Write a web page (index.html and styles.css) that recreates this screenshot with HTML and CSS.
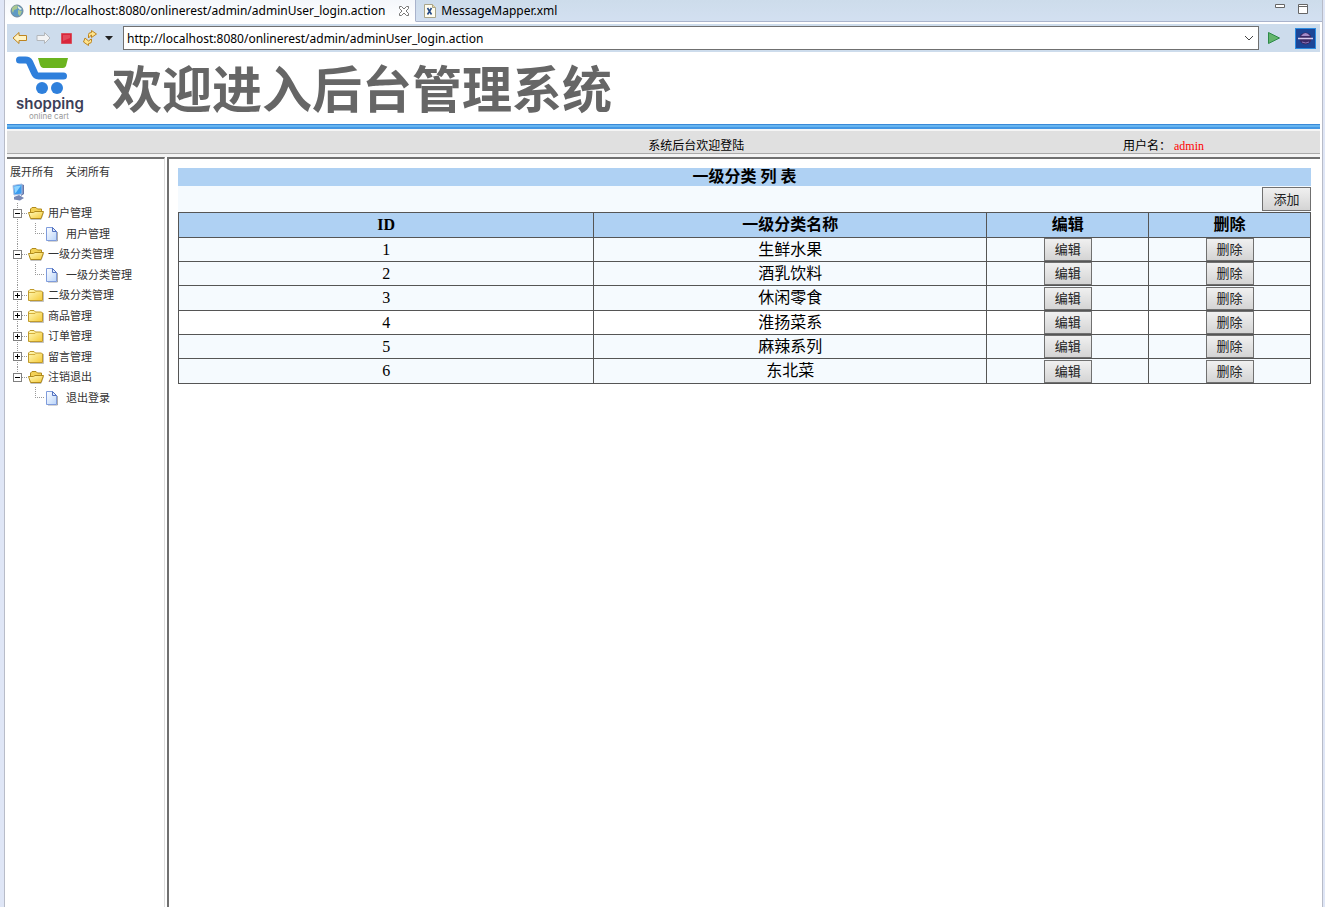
FILE: index.html
```
<!DOCTYPE html>
<html lang="zh-CN">
<head>
    <meta charset="UTF-8">
    <meta name="viewport" content="width=device-width, initial-scale=1.0">
    <title>后台管理系统</title>
    <link rel="stylesheet" href="styles.css">
</head>
<body>

    <!-- Shared icons -->
    <svg class="sprite" aria-hidden="true">
        <defs>
            <linearGradient id="folder-fill" x1="0" y1="0" x2="1" y2="1">
                <stop offset="0" stop-color="#fffbc0"/>
                <stop offset="1" stop-color="#f5c935"/>
            </linearGradient>
            <linearGradient id="page-fill" x1="0" y1="0" x2="1" y2="1">
                <stop offset="0" stop-color="#ffffff"/>
                <stop offset="1" stop-color="#b9d4fa"/>
            </linearGradient>
        </defs>
        <symbol id="folder-open" viewBox="0 0 16 16">
            <path d="M2.500 14.500h10.500l2.500-7" fill="none" stroke="#999" opacity=".6"/>
            <path d="M2.500 13V4l1.500-1.500h4L9.500 4h4V8" fill="#f3d155" stroke="#b08a1c"/>
            <path d="M.5 7.500h5l1.500-1h8.500L13 13.500H2.500z" fill="url(#folder-fill)" stroke="#b08a1c"/>
        </symbol>
        <symbol id="folder" viewBox="0 0 16 16">
            <path d="M2 14.500h13.500V5" fill="none" stroke="#999" opacity=".6"/>
            <path d="M.5 13.500V4L2 2.500h4L7.500 4h6l1 1v8.500z" fill="url(#folder-fill)" stroke="#c09a2c"/>
            <path d="M1 5.500h6l1-1" fill="none" stroke="#d4ae3c"/>
        </symbol>
        <symbol id="page" viewBox="0 0 16 16">
            <path d="M3 15h9.500V6" fill="none" stroke="#777" opacity=".6"/>
            <path d="M1.500 1.500h6l4 4v9h-10z" fill="url(#page-fill)" stroke="#7f9cdc"/>
            <path d="M7.500 1.500v4h4z" fill="#dfeafd" stroke="#5372c0"/>
        </symbol>
        <symbol id="plus" viewBox="0 0 9 9">
            <rect x=".5" y=".5" width="8" height="8" fill="#fff" stroke="#808080"/>
            <path d="M2 4.500h5M4.500 2v5" stroke="#000"/>
        </symbol>
        <symbol id="minus" viewBox="0 0 9 9">
            <rect x=".5" y=".5" width="8" height="8" fill="#fff" stroke="#808080"/>
            <path d="M2 4.500h5" stroke="#000"/>
        </symbol>
    </svg>

    <div class="window">
        <!-- Editor tabs -->
        <div class="tabs">
            <div class="tab active">
                <svg width="14" height="14" viewBox="0 0 14 14">
                    <circle cx="7" cy="7" r="6" fill="#5f9ac4" stroke="#6f8798"/>
                    <path d="M2 4q3-4 6-2l-1 3-3 1-1 3-1-2zM8 6l4 1-2 5-2-2z" fill="#a9c890"/>
                    <path d="M8 2l4 3-2 1-2-2z" fill="#e8efe0"/>
                </svg>
                <span>http://localhost:8080/onlinerest/admin/adminUser_login.action</span>
                <button class="icon-btn close" aria-label="Close">
                    <svg width="12" height="12" viewBox="0 0 12 12">
                        <path d="M1.500 1.500h2L6 4l2.500-2.500h2v2L8 6l2.500 2.500v2h-2L6 8l-2.500 2.500h-2v-2L4 6 1.500 3.500z" fill="#fff" stroke="#777"/>
                    </svg>
                </button>
            </div>
            <div class="tab">
                <svg width="12" height="14" viewBox="0 0 12 14">
                    <path d="M.5.5h8l3 3v10H.5z" fill="#fffdf0" stroke="#a9a58a"/>
                    <path d="M8.500.5v3h3" fill="#e9d9a0" stroke="#a9a58a"/>
                    <path d="M3.500 4l4 6.500M7.500 4l-4 6.500" stroke="#274b86" stroke-width="1.600"/>
                </svg>
                <span>MessageMapper.xml</span>
            </div>
            <div class="window-btns">
                <button class="icon-btn" aria-label="Minimize">
                    <svg width="12" height="12" viewBox="0 0 12 12"><path d="M1.500 1.500h9v3h-9z" fill="#fff" stroke="#666"/></svg>
                </button>
                <button class="icon-btn" aria-label="Maximize">
                    <svg width="12" height="12" viewBox="0 0 12 12"><path d="M1.500 1.500h9v9h-9zM1.500 3.500h9" fill="#fff" stroke="#666"/></svg>
                </button>
            </div>
        </div>

        <!-- Browser toolbar -->
        <div class="toolbar">
            <button class="icon-btn" aria-label="Back">
                <svg width="16" height="14" viewBox="0 0 16 14"><path d="M1 7L7 1.500v3h7.500v5H7v3z" fill="#fff3c4" stroke="#bd8420"/></svg>
            </button>
            <button class="icon-btn" aria-label="Forward">
                <svg width="16" height="14" viewBox="0 0 16 14"><path d="M14 7L8.500 1.500v3H1v5h7.500v3z" fill="#f2f3f4" stroke="#b3b7bb"/></svg>
            </button>
            <button class="icon-btn" aria-label="Stop">
                <svg width="14" height="14" viewBox="0 0 14 14"><path d="M1.500 2.500h10v10h-10z" fill="#d9263c" stroke="#d8505c"/><path d="M3 4h7v3l-7 3z" fill="#e34a5a"/></svg>
            </button>
            <button class="icon-btn" aria-label="Refresh">
                <svg width="16" height="16" viewBox="0 0 16 16">
                    <path d="M6.500 8V4.500q0-2 3-2V.5L14.500 4l-5 3.500V5q-1 0-1 1z" fill="#ffe48c" stroke="#bd8420"/>
                    <path d="M9.500 9v2.500q0 2-3 2v2l-5-3.500L3 8l3.500 3q1 0 1-1z" fill="#ffe48c" stroke="#bd8420"/>
                </svg>
            </button>
            <button class="icon-btn menu-arrow" aria-label="Menu">
                <svg width="8" height="5" viewBox="0 0 8 5"><path d="M0 0h8L4 4.500z" fill="#222"/></svg>
            </button>
            <div class="address">
                <input type="text" aria-label="URL" value="http://localhost:8080/onlinerest/admin/adminUser_login.action">
                <button class="icon-btn" aria-label="History">
                    <svg width="10" height="6" viewBox="0 0 10 6"><path d="M1 1l4 4 4-4" fill="none" stroke="#444"/></svg>
                </button>
            </div>
            <button class="icon-btn go" aria-label="Go">
                <svg width="14" height="14" viewBox="0 0 14 14"><path d="M1.500 1.500v11L12.500 7z" fill="#63b56c" stroke="#2d8a48"/></svg>
            </button>
            <svg class="eclipse" width="21" height="21" viewBox="0 0 21 21">
                <rect x=".5" y=".5" width="20" height="20" fill="#1c4596" stroke="#2a8be0"/>
                <circle cx="10.500" cy="10.500" r="6" fill="#3c2a66"/>
                <path d="M6 8q4.500-6 9 0z" fill="#a48bc8"/>
                <path d="M3 10.500h15" stroke="#d9cdf0" stroke-width="1.500"/>
                <path d="M7 14q4 2 7 0" stroke="#8d76bd" fill="none"/>
            </svg>
        </div>

        <!-- Page header -->
        <header class="banner">
            <div class="logo">
                <svg width="54" height="38" viewBox="0 0 54 38">
                    <path d="M22 2h30l-2 8q-1 2-3 2H27q-2 0-3-3z" fill="#6bb41e"/>
                    <path d="M3.500 4h6q3 0 4 2l5 11q1 3 4 3h25" fill="none" stroke="#2f80dc" stroke-width="7" stroke-linecap="round" stroke-linejoin="round"/>
                    <circle cx="26" cy="32" r="6" fill="#2f80dc"/>
                    <circle cx="41" cy="32" r="6" fill="#2f80dc"/>
                </svg>
                <strong>shopping</strong>
                <small>online cart</small>
            </div>
            <h1>欢迎进入后台管理系统</h1>
        </header>
        <div class="status">
            <span class="welcome">系统后台欢迎登陆</span>
            <span>用户名： <span class="user">admin</span></span>
        </div>

        <div class="frames">
            <!-- Menu tree -->
            <nav class="sidebar">
                <div class="tree-links">
                    <a href="#">展开所有</a>
                    <a href="#">关闭所有</a>
                </div>
                <svg class="computer" width="16" height="18" viewBox="0 0 16 18">
                    <path d="M2 14l5-2 5 3-4 2.500-6-1z" fill="#7787b4"/>
                    <path d="M9 1l3 1v9l-3 2z" fill="#6878a8"/>
                    <path d="M1 2.500l9-1.500v10l-8 1z" fill="#3a9cf0" stroke="#a9bce0"/>
                    <path d="M2 3.500l7-1-5 7-1 .5z" fill="#8fd4ff"/>
                </svg>
                <ul class="tree">
                    <li>
                        <a class="node" href="#"><svg class="toggle"><use href="#minus"/></svg><svg class="icon"><use href="#folder-open"/></svg>用户管理</a>
                        <ul>
                            <li><a class="node" href="#"><svg class="icon"><use href="#page"/></svg>用户管理</a></li>
                        </ul>
                    </li>
                    <li>
                        <a class="node" href="#"><svg class="toggle"><use href="#minus"/></svg><svg class="icon"><use href="#folder-open"/></svg>一级分类管理</a>
                        <ul>
                            <li><a class="node" href="#"><svg class="icon"><use href="#page"/></svg>一级分类管理</a></li>
                        </ul>
                    </li>
                    <li><a class="node" href="#"><svg class="toggle"><use href="#plus"/></svg><svg class="icon"><use href="#folder"/></svg>二级分类管理</a></li>
                    <li><a class="node" href="#"><svg class="toggle"><use href="#plus"/></svg><svg class="icon"><use href="#folder"/></svg>商品管理</a></li>
                    <li><a class="node" href="#"><svg class="toggle"><use href="#plus"/></svg><svg class="icon"><use href="#folder"/></svg>订单管理</a></li>
                    <li><a class="node" href="#"><svg class="toggle"><use href="#plus"/></svg><svg class="icon"><use href="#folder"/></svg>留言管理</a></li>
                    <li>
                        <a class="node" href="#"><svg class="toggle"><use href="#minus"/></svg><svg class="icon"><use href="#folder-open"/></svg>注销退出</a>
                        <ul>
                            <li><a class="node" href="#"><svg class="icon"><use href="#page"/></svg>退出登录</a></li>
                        </ul>
                    </li>
                </ul>
            </nav>

            <!-- Category list -->
            <main class="content">
                <h2>一级分类 列 表</h2>
                <div class="actions"><button class="btn">添加</button></div>
                <table class="list">
                    <colgroup>
                        <col class="col-id">
                        <col class="col-name">
                        <col class="col-op">
                        <col class="col-op">
                    </colgroup>
                    <thead>
                        <tr>
                            <th>ID</th>
                            <th>一级分类名称</th>
                            <th>编辑</th>
                            <th>删除</th>
                        </tr>
                    </thead>
                    <tbody>
                        <tr>
                            <td>1</td>
                            <td>生鲜水果</td>
                            <td><button class="btn">编辑</button></td>
                            <td><button class="btn">删除</button></td>
                        </tr>
                        <tr>
                            <td>2</td>
                            <td>酒乳饮料</td>
                            <td><button class="btn">编辑</button></td>
                            <td><button class="btn">删除</button></td>
                        </tr>
                        <tr>
                            <td>3</td>
                            <td>休闲零食</td>
                            <td><button class="btn">编辑</button></td>
                            <td><button class="btn">删除</button></td>
                        </tr>
                        <tr class="current">
                            <td>4</td>
                            <td>淮扬菜系</td>
                            <td><button class="btn">编辑</button></td>
                            <td><button class="btn">删除</button></td>
                        </tr>
                        <tr>
                            <td>5</td>
                            <td>麻辣系列</td>
                            <td><button class="btn">编辑</button></td>
                            <td><button class="btn">删除</button></td>
                        </tr>
                        <tr>
                            <td>6</td>
                            <td>东北菜</td>
                            <td><button class="btn">编辑</button></td>
                            <td><button class="btn">删除</button></td>
                        </tr>
                    </tbody>
                </table>
            </main>
        </div>
    </div>

</body>
</html>
```
FILE: styles.css
```
* {
    box-sizing: border-box;
}
body {
    margin: 0;
    padding: 0 2px 0 4px;
    background-color: #dfe6f6;
    font-family: "Liberation Serif", "Noto Sans CJK SC", serif;
    color: #000;
}
.sprite {
    position: absolute;
    width: 0;
    height: 0;
}
.window {
    display: flex;
    flex-direction: column;
    min-height: 100vh;
    background-color: #fff;
    border-left: 1px solid #b8bcc8;
    border-right: 1px solid #b8bcc8;
}
.icon-btn {
    display: flex;
    padding: 0;
    border: 0;
    background: none;
}

/* Tabs */
.tabs {
    display: flex;
    height: 22px;
    background: linear-gradient(#cddceb, #d3e0f1);
    font: 12px "Noto Sans", sans-serif;
}
.tab {
    display: flex;
    align-items: center;
    gap: 5px;
    padding: 0 8px;
    border-bottom: 1px solid #a9b3cc;
}
.tab.active {
    padding: 0 5px;
    background: linear-gradient(#f4f7fb, #fff);
    border-right: 1px solid #a9b3cc;
    border-bottom-color: #fff;
}
.close {
    margin-left: 8px;
}
.window-btns {
    flex: 1;
    display: flex;
    justify-content: flex-end;
    gap: 11px;
    padding: 3px 13px 0 0;
    border-bottom: 1px solid #a9b3cc;
}

/* Toolbar */
.toolbar {
    display: flex;
    align-items: center;
    gap: 8px;
    height: 28px;
    margin: 2px 2px 0;
    padding: 0 4px 0 5px;
    background-color: #cddcec;
}
.menu-arrow {
    margin-left: -1px;
}
.address {
    flex: 1;
    display: flex;
    align-items: center;
    height: 24px;
    margin-left: 2px;
    padding-right: 4px;
    border: 1px solid #707070;
    background-color: #fff;
}
.address input {
    flex: 1;
    padding: 0 3px;
    border: 0;
    outline: 0;
    font: 12px "Noto Sans", sans-serif;
}
.go {
    margin-right: 6px;
}

/* Header */
.banner {
    display: flex;
    height: 72px;
    margin: 0 2px;
    padding-left: 9px;
}
.logo {
    display: flex;
    flex-direction: column;
    width: 96px;
    padding-top: 4px;
    color: #3c4058;
    font-family: "Inter", sans-serif;
}
.logo strong {
    font-size: 15px;
    font-weight: 600;
    line-height: 20px;
}
.logo small {
    padding-left: 13px;
    font-size: 8px;
    line-height: 4px;
    color: #999;
}
.banner h1 {
    margin: 0;
    font: bold 50px/68px "Noto Sans CJK SC", sans-serif;
    color: #666;
}
.status {
    display: flex;
    height: 33px;
    margin: 0 2px;
    padding-top: 11px;
    background: linear-gradient(#3a8ad8 0 1px, #66b5f0 1px 3px, #4598e4 3px 5px, #f5f5f5 5px 7px, #e0e0e0 7px 29px, #aaa 29px 30px, #f4f4f4 30px);
    font-size: 12px;
    line-height: 22px;
}
.welcome {
    width: 65%;
    margin-left: 20%;
    text-align: center;
}
.user {
    color: #f00;
}

/* Frames */
.frames {
    flex: 1;
    display: flex;
    margin: 0 2px;
}
.sidebar {
    width: 158px;
    padding: 4px 3px;
    border-top: 2px solid #707070;
    border-right: 1px solid #ddd;
    font: 11px "Noto Sans CJK SC", sans-serif;
}
.sidebar a {
    color: #333;
    text-decoration: none;
}
.tree-links {
    display: flex;
    gap: 12px;
    line-height: 16px;
}
.computer {
    display: block;
    margin: 4px 0 2px 2px;
}
.tree, .tree ul {
    margin: 0;
    padding: 0;
    list-style: none;
}
.tree > li {
    padding-left: 3px;
    background: repeating-linear-gradient(#999 0 1px, transparent 1px 2px) 7px 0 / 1px 100% no-repeat;
}
.tree > li:last-child {
    background-size: 1px 12px;
}
.node {
    display: flex;
    align-items: center;
    height: 20px;
    padding-bottom: 2px;
}
.tree ul .node, .tree > li:nth-child(2n+4) > .node {
    height: 21px;
}
.toggle {
    flex: none;
    width: 9px;
    height: 9px;
    margin-top: 2px;
}
.icon {
    width: 16px;
    height: 16px;
    margin: 2px 4px 0 0;
}
.toggle + .icon {
    margin-left: 6px;
}
.tree > li > .node {
    background: repeating-linear-gradient(90deg, #999 0 1px, transparent 1px 2px) 9px 10px / 6px 1px no-repeat;
}
.tree ul .node {
    margin-left: 22px;
    padding-left: 10px;
    background:
        repeating-linear-gradient(#999 0 1px, transparent 1px 2px) 0 0 / 1px 10px no-repeat,
        repeating-linear-gradient(90deg, #999 0 1px, transparent 1px 2px) 0 10px / 10px 1px no-repeat;
}
.tree ul .icon {
    margin-right: 5px;
}

/* Category list */
.content {
    flex: 1;
    margin-left: 2px;
    padding: 9px;
    border-top: 2px solid #707070;
    border-left: 2px solid #707070;
}
.content h2 {
    margin: 0;
    background-color: #afd1f3;
    font-size: 16px;
    line-height: 18px;
    text-align: center;
}
.actions {
    display: flex;
    justify-content: flex-end;
    padding: 1px 0;
    background-color: #f5fafe;
}
.btn {
    display: block;
    width: 48px;
    height: 23px;
    margin: 0 auto;
    padding: 0 0 2px;
    border: 1px solid #707070;
    background: linear-gradient(#f0f0f0, #d4d4d4);
    font: 13px "Noto Sans CJK SC", sans-serif;
    color: #222;
}
.actions .btn {
    width: 49px;
    height: 24px;
    margin: 0;
}
.list {
    width: 100%;
    table-layout: fixed;
    border-collapse: collapse;
    background-color: #f5fafe;
    text-align: center;
}
.col-id {
    width: 36.7%;
}
.col-name {
    width: 34.7%;
}
.list th, .list td {
    height: 24px;
    padding: 0;
    border: 1px solid #555;
    font-size: 16px;
    line-height: 22px;
}
.list th {
    height: 25px;
    background-color: #afd1f3;
}
.list tr:nth-child(3n) td {
    height: 25px;
}
.list .current {
    background-color: #fff;
}
```
